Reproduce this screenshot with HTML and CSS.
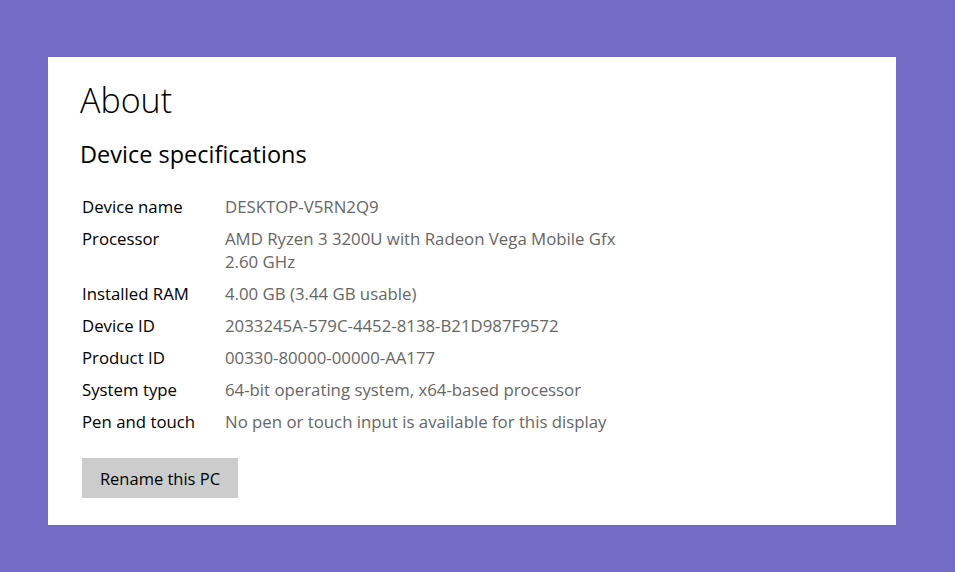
FILE: index.html
```html
<!DOCTYPE html>
<html lang="en">
<head>
  <meta charset="UTF-8">
  <title>About</title>
  <link rel="stylesheet" href="styles.css">
</head>
<body>
  <div class="card">
    <h1>About</h1>
    <h2>Device specifications</h2>

    <div class="specs">
      <div class="label">Device name</div>
      <div class="value">DESKTOP-V5RN2Q9</div>

      <div class="label">Processor</div>
      <div class="value">AMD Ryzen 3 3200U with Radeon Vega Mobile Gfx<br>2.60 GHz</div>

      <div class="label">Installed RAM</div>
      <div class="value">4.00 GB (3.44 GB usable)</div>

      <div class="label">Device ID</div>
      <div class="value">2033245A-579C-4452-8138-B21D987F9572</div>

      <div class="label">Product ID</div>
      <div class="value">00330-80000-00000-AA177</div>

      <div class="label">System type</div>
      <div class="value">64-bit operating system, x64-based processor</div>

      <div class="label">Pen and touch</div>
      <div class="value">No pen or touch input is available for this display</div>
    </div>

    <button class="rename">Rename this PC</button>
  </div>
</body>
</html>
```

FILE: styles.css
```css
html, body {
  margin: 0;
  height: 100%;
}
body {
  background-color: #736bc6;
  font-family: "Open Sans", "Noto Sans", sans-serif;
  color: #000;
  padding: 57px 59px 47px 48px;
  box-sizing: border-box;
}
.card {
  background-color: #fff;
  width: 848px;
  height: 468px;
  box-sizing: border-box;
  padding: 20px 32px 0 32px;
}
h1 {
  font-size: 34px;
  font-weight: 300;
  margin: 0;
  line-height: 46px;
}
h2 {
  font-size: 23.5px;
  font-weight: 400;
  margin: 16px 0 0 0;
  line-height: 30px;
}
.specs {
  display: grid;
  grid-template-columns: 143px auto;
  row-gap: 9px;
  margin: 26px 0 0 2px;
  font-size: 16.8px;
  line-height: 23px;
}
.value {
  color: #666;
}
.rename {
  display: block;
  margin: 25px 0 0 2px;
  width: 156px;
  height: 40px;
  border: none;
  background-color: #ccc;
  font-family: inherit;
  font-size: 16.5px;
  color: #000;
  padding: 0;
}
```
